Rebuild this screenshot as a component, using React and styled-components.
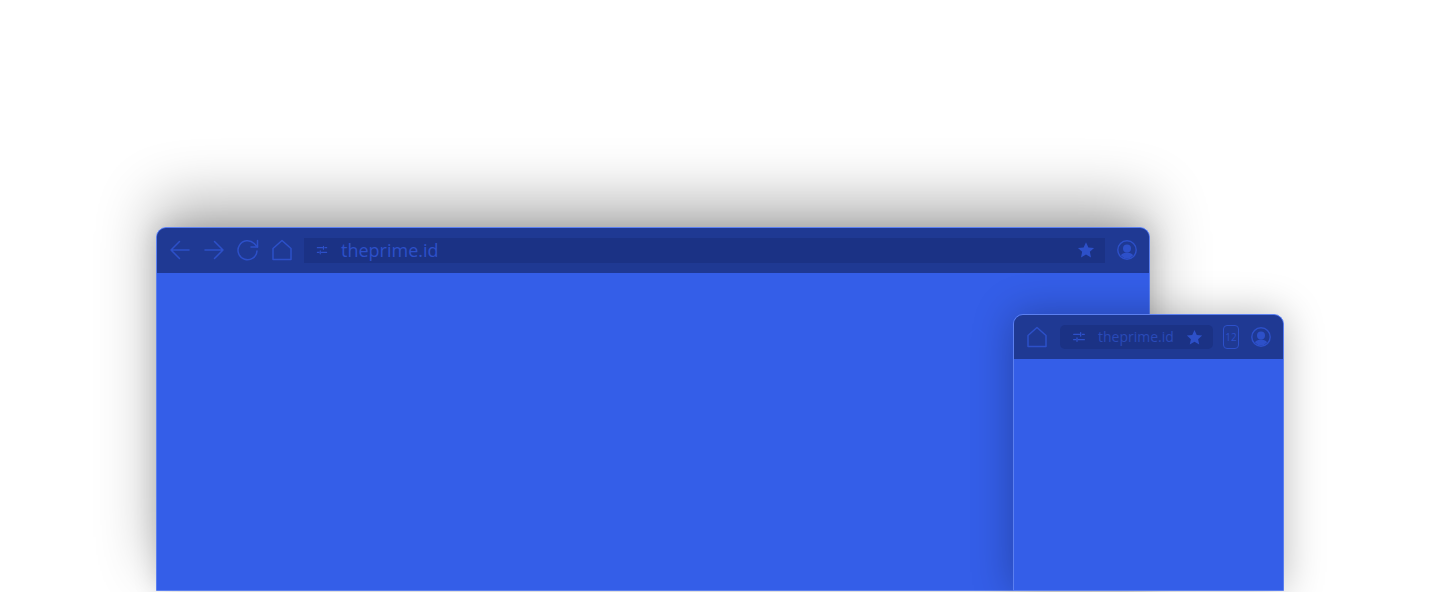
import React from "react";
import styled, { createGlobalStyle } from "styled-components";

const GlobalStyle = createGlobalStyle`
  html, body {
    margin: 0;
    background: #ffffff;
    overflow: hidden;
  }
`;

const Stage = styled.div`
  position: relative;
  height: 592px;
  box-sizing: border-box;
  padding: 227px 290px 1px 156px;
  overflow: hidden;
  background: #ffffff;
  font-family: "Open Sans", "Noto Sans", sans-serif;
`;

const Window = styled.div`
  display: flex;
  flex-direction: column;
  height: 100%;
  box-sizing: border-box;
  overflow: hidden;
  background: #345ee8;
  border: 1px solid #5c80f0;
  border-radius: 10px 10px 0 0;
`;

const MainFrame = styled.div`
  height: 100%;
  border-radius: 10px 10px 0 0;
  box-shadow: 0 -26px 60px rgba(0, 0, 0, 0.3), 0 0 24px rgba(0, 0, 0, 0.14);
`;

const SmallFrame = styled.div`
  position: absolute;
  left: 1013px;
  top: 314px;
  width: 271px;
  height: 277px;
  border-radius: 10px 10px 0 0;
  box-shadow: 0 0 40px rgba(0, 0, 0, 0.28);
`;

const Toolbar = styled.div`
  display: flex;
  align-items: center;
  flex-shrink: 0;
  box-sizing: border-box;
  height: ${(p) => p.$height}px;
  padding: ${(p) => p.$padding};
  background: #1f3993;
`;

const IconSlot = styled.span`
  display: flex;
  flex-shrink: 0;
  color: #2d50c9;
  margin-right: ${(p) => p.$gap || 0}px;
`;

const AddressBar = styled.div`
  display: flex;
  align-items: center;
  flex: ${(p) => (p.$compact ? "0 0 153px" : "1")};
  box-sizing: border-box;
  height: ${(p) => (p.$compact ? 24 : 25)}px;
  padding: ${(p) => (p.$compact ? "0 10px 0 11px" : "0 10px 0 11px")};
  margin-right: ${(p) => (p.$compact ? 10 : 12)}px;
  background: #1b3285;
  border-radius: ${(p) => (p.$compact ? 5 : 0)}px;
`;

const Url = styled.span`
  flex: 1;
  margin-left: ${(p) => (p.$compact ? 11 : 12)}px;
  font-size: ${(p) => (p.$compact ? 14 : 18)}px;
  line-height: 20px;
  color: ${(p) => (p.$compact ? "#2a4ab8" : "#2d50c9")};
`;

const TabCount = styled.span`
  display: flex;
  align-items: center;
  justify-content: center;
  box-sizing: border-box;
  width: 18px;
  height: 24px;
  margin-right: 12px;
  border: 1px solid #2d50c9;
  border-radius: 4px;
  font-size: 10px;
  color: #2d50c9;
`;

const Line = ({ size = 24, children, width = 1.5 }) => (
  <svg
    width={size}
    height={size}
    viewBox="0 0 24 24"
    fill="none"
    stroke="currentColor"
    strokeWidth={width}
    strokeLinecap="round"
    strokeLinejoin="round"
  >
    {children}
  </svg>
);

const BackIcon = () => (
  <Line>
    <path d="M21 12H3M11.5 3.5 3 12l8.500 8.500" />
  </Line>
);

const ForwardIcon = () => (
  <Line>
    <path d="M3 12h18M12.500 3.500 21 12l-8.500 8.500" />
  </Line>
);

const ReloadIcon = () => (
  <Line>
    <path d="M21 13a9.500 9.500 0 1 1-2.800-7.500L21.500 9" />
    <path d="M21.500 2.500V9H15" />
  </Line>
);

const HomeIcon = () => (
  <Line>
    <path d="M3 21.500V10.500L12 2.500l9 8v11z" />
  </Line>
);

const TuneIcon = ({ size }) => (
  <Line size={size} width={2}>
    <path d="M4 8h9M17 8h3M4 16h3M11 16h9" />
    <path d="M14.500 5.500v5M9 13.500v5" />
  </Line>
);

const StarIcon = ({ size }) => (
  <svg width={size} height={size} viewBox="0 0 24 24" fill="currentColor">
    <path d="M12 1.500l3.200 7 7.600.8-5.700 5.100 1.600 7.500L12 18.100l-6.700 3.800 1.600-7.500L1.200 9.300l7.600-.8z" />
  </svg>
);

const ProfileIcon = () => (
  <svg width="20" height="20" viewBox="0 0 20 20">
    <circle cx="10" cy="10" r="9.200" fill="none" stroke="currentColor" strokeWidth="1.400" />
    <circle cx="10" cy="8.500" r="4" fill="currentColor" />
    <path d="M3.800 15.200c1.600-1.800 3.700-2.700 6.200-2.700s4.600.9 6.200 2.700A8.400 8.400 0 0 1 10 18.400a8.400 8.400 0 0 1-6.200-3.200z" fill="currentColor" />
  </svg>
);

const App = () => (
  <>
    <GlobalStyle />
    <Stage>
      <MainFrame>
        <Window>
          <Toolbar $height={45} $padding="0 12px 1px 11px">
            <IconSlot $gap={10}>
              <BackIcon />
            </IconSlot>
            <IconSlot $gap={10}>
              <ForwardIcon />
            </IconSlot>
            <IconSlot $gap={10}>
              <ReloadIcon />
            </IconSlot>
            <IconSlot $gap={10}>
              <HomeIcon />
            </IconSlot>
            <AddressBar>
              <IconSlot>
                <TuneIcon size={14} />
              </IconSlot>
              <Url>theprime.id</Url>
              <IconSlot>
                <StarIcon size={18} />
              </IconSlot>
            </AddressBar>
            <IconSlot>
              <ProfileIcon />
            </IconSlot>
          </Toolbar>
        </Window>
      </MainFrame>
      <SmallFrame>
        <Window>
          <Toolbar $height={44} $padding="0 12px 0 11px">
            <IconSlot $gap={11}>
              <HomeIcon />
            </IconSlot>
            <AddressBar $compact>
              <IconSlot>
                <TuneIcon size={16} />
              </IconSlot>
              <Url $compact>theprime.id</Url>
              <IconSlot>
                <StarIcon size={17} />
              </IconSlot>
            </AddressBar>
            <TabCount>12</TabCount>
            <IconSlot>
              <ProfileIcon />
            </IconSlot>
          </Toolbar>
        </Window>
      </SmallFrame>
    </Stage>
  </>
);

export default App;
